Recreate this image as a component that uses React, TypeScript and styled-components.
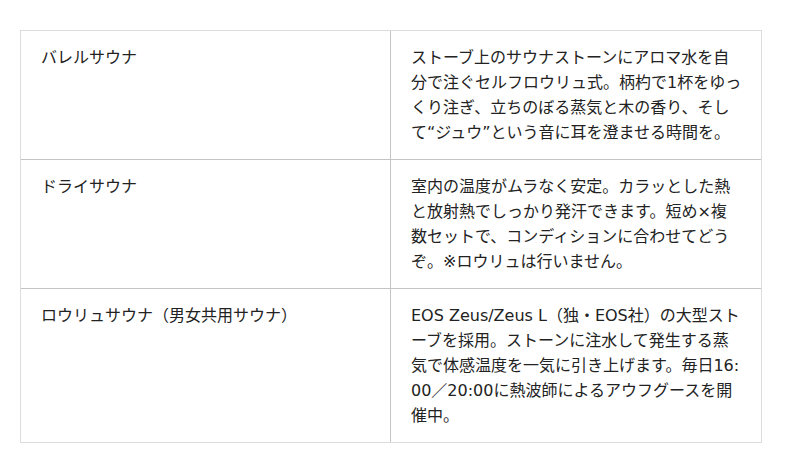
import React from "react";
import styled, { createGlobalStyle } from "styled-components";

const GlobalStyle = createGlobalStyle`
  html, body {
    margin: 0;
    padding: 0;
    background: #ffffff;
  }
  body {
    font-family: "DejaVu Sans", "Noto Sans CJK JP", sans-serif;
    color: #222222;
  }
`;

const Page = styled.main`
  padding: 30px 20px;
`;

const Table = styled.div`
  width: 742px;
  box-sizing: border-box;
  border: 1px solid #dcdcdc;
  display: flex;
  flex-direction: column;
`;

const Row = styled.div<{ $first?: boolean }>`
  display: grid;
  grid-template-columns: 369px 1fr;
  border-top: ${(p) => (p.$first ? "none" : "1px solid #c4c4c4")};
`;

const Cell = styled.div<{ $divider?: boolean }>`
  padding: 14px 19px 14px 20px;
  font-size: 16px;
  line-height: 25px;
  word-break: break-all;
  border-left: ${(p) => (p.$divider ? "1px solid #c4c4c4" : "none")};
`;

const rows = [
  {
    name: "バレルサウナ",
    desc: "ストーブ上のサウナストーンにアロマ水を自分で注ぐセルフロウリュ式。柄杓で1杯をゆっくり注ぎ、立ちのぼる蒸気と木の香り、そして“ジュウ”という音に耳を澄ませる時間を。",
  },
  {
    name: "ドライサウナ",
    desc: "室内の温度がムラなく安定。カラッとした熱と放射熱でしっかり発汗できます。短め×複数セットで、コンディションに合わせてどうぞ。※ロウリュは行いません。",
  },
  {
    name: "ロウリュサウナ（男女共用サウナ）",
    desc: "EOS Zeus/Zeus L（独・EOS社）の大型ストーブを採用。ストーンに注水して発生する蒸気で体感温度を一気に引き上げます。毎日16:00／20:00に熱波師によるアウフグースを開催中。",
  },
];

export default function App() {
  return (
    <>
      <GlobalStyle />
      <Page>
        <Table>
          {rows.map((r, i) => (
            <Row key={r.name} $first={i === 0}>
              <Cell>{r.name}</Cell>
              <Cell $divider>{r.desc}</Cell>
            </Row>
          ))}
        </Table>
      </Page>
    </>
  );
}
